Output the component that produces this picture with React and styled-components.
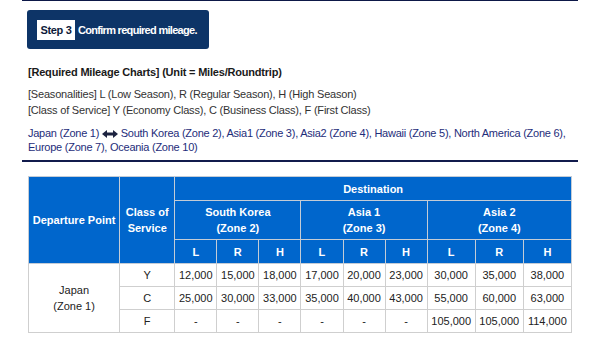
import React from 'react';
import styled, { createGlobalStyle } from 'styled-components';

const GlobalStyle = createGlobalStyle`
  body {
    margin: 0;
    background: #fff;
    font-family: "Liberation Sans", Arial, sans-serif;
  }
`;

const seasons = ['L', 'R', 'H'];

const zones = [
  { name: 'South Korea', zone: 'Zone 2', wide: false },
  { name: 'Asia 1', zone: 'Zone 3', wide: false },
  { name: 'Asia 2', zone: 'Zone 4', wide: true },
];

const rows = [
  { cls: 'Y', miles: ['12,000', '15,000', '18,000', '17,000', '20,000', '23,000', '30,000', '35,000', '38,000'] },
  { cls: 'C', miles: ['25,000', '30,000', '33,000', '35,000', '40,000', '43,000', '55,000', '60,000', '63,000'] },
  { cls: 'F', miles: ['-', '-', '-', '-', '-', '-', '105,000', '105,000', '114,000'] },
];

const ArrowIcon = () => (
  <svg width="16" height="8" viewBox="0 0 16 8">
    <path d="M0 4 L5 0 L5 2.5 L11 2.5 L11 0 L16 4 L11 8 L11 5.5 L5 5.5 L5 8 Z" fill="#1c2340" />
  </svg>
);

const App = () => {
  return (
    <Page>
      <GlobalStyle />
      <StepBar>
        <StepTag>Step 3</StepTag>
        <StepText>Confirm required mileage.</StepText>
      </StepBar>

      <Heading>[Required Mileage Charts] (Unit = Miles/Roundtrip)</Heading>
      <Legend>
        [Seasonalities] L (Low Season), R (Regular Season), H (High Season)
        <br />
        [Class of Service] Y (Economy Class), C (Business Class), F (First Class)
      </Legend>
      <Route>
        Japan (Zone 1) <ArrowIcon /> South Korea (Zone 2), Asia1 (Zone 3), Asia2 (Zone 4), Hawaii (Zone 5), North America (Zone 6),
        <br />
        Europe (Zone 7), Oceania (Zone 10)
      </Route>

      <Rule />

      <Chart>
        <colgroup>
          <col style={{ width: 91 }} />
          <col style={{ width: 55 }} />
          {zones.map(z =>
            seasons.map(s => <col key={z.name + s} style={{ width: z.wide ? 48 : 42 }} />)
          )}
        </colgroup>
        <thead>
          <tr>
            <Th rowSpan={3}>Departure Point</Th>
            <Th rowSpan={3}>Class of<br />Service</Th>
            <Th colSpan={9} $h={24}>Destination</Th>
          </tr>
          <tr>
            {zones.map(z => (
              <Th key={z.name} colSpan={3} $h={39}>
                {z.name}<br />({z.zone})
              </Th>
            ))}
          </tr>
          <tr>
            {zones.map(z =>
              seasons.map(s => <Th key={z.name + s} $h={24}>{s}</Th>)
            )}
          </tr>
        </thead>
        <tbody>
          {rows.map((r, i) => (
            <tr key={r.cls}>
              {i === 0 && <Td rowSpan={3}>Japan<br />(Zone 1)</Td>}
              <Td $h={23}>{r.cls}</Td>
              {r.miles.map((m, j) => (
                <Td key={j}>{m}</Td>
              ))}
            </tr>
          ))}
        </tbody>
      </Chart>
    </Page>
  );
};

const Page = styled.div`
  width: 556px;
  margin: 0 22px;
  padding-top: 9px;
  border-top: 1px solid #0d1848;
  box-sizing: border-box;
`;

const StepBar = styled.div`
  display: flex;
  align-items: center;
  width: 182px;
  height: 39px;
  margin-left: 5px;
  padding-left: 10px;
  box-sizing: border-box;
  background: #0d3467;
  border-radius: 3px;
`;

const StepTag = styled.span`
  display: flex;
  align-items: center;
  justify-content: center;
  width: 38px;
  height: 20px;
  background: #fff;
  color: #0d1a3a;
  font-size: 11px;
  font-weight: bold;
  letter-spacing: -0.3px;
`;

const StepText = styled.span`
  margin-left: 3px;
  color: #fff;
  font-size: 11px;
  font-weight: bold;
  letter-spacing: -0.7px;
`;

const Heading = styled.div`
  margin: 16px 0 0 6px;
  font-size: 11px;
  line-height: 14px;
  font-weight: bold;
  letter-spacing: -0.2px;
  color: #1a1a1a;
`;

const Legend = styled.div`
  margin: 7px 0 0 6px;
  font-size: 11px;
  line-height: 16px;
  letter-spacing: -0.2px;
  color: #333;
`;

const Route = styled.div`
  margin: 8px 0 0 6px;
  font-size: 11px;
  line-height: 14px;
  letter-spacing: -0.25px;
  white-space: nowrap;
  color: #1e2d7a;

  svg {
    vertical-align: -1px;
  }
`;

const Rule = styled.div`
  height: 2px;
  margin-top: 6px;
  background: #111b4c;
`;

const Chart = styled.table`
  width: 544px;
  margin: 14px 0 0 6px;
  border-collapse: collapse;
  table-layout: fixed;
  font-size: 11px;
`;

const Th = styled.th`
  height: ${p => (p.$h ? `${p.$h - 1}px` : 'auto')};
  padding: 0;
  background: #0066cc;
  color: #fff;
  font-weight: bold;
  line-height: 16px;
  text-align: center;
  border: 1px solid #c4ccd6;
`;

const Td = styled.td`
  height: ${p => (p.$h ? `${p.$h - 1}px` : 'auto')};
  padding: 0;
  color: #222;
  line-height: 16px;
  text-align: center;
  border: 1px solid #cfcfcf;
`;

export default App;
